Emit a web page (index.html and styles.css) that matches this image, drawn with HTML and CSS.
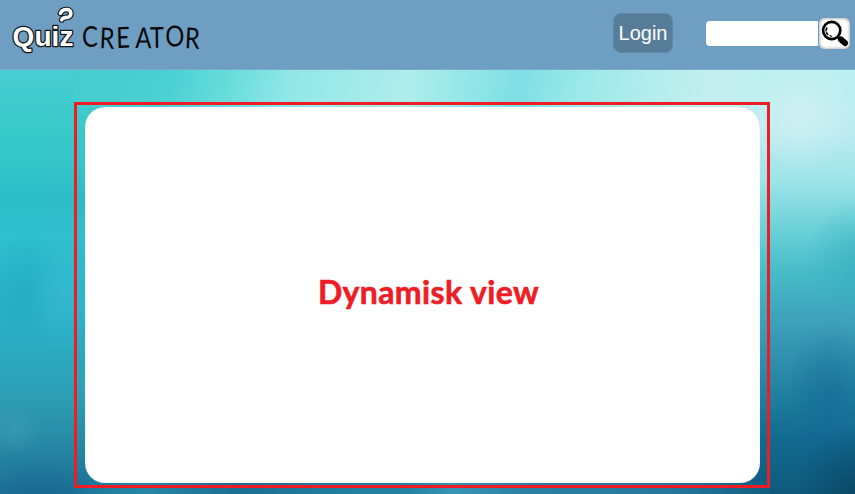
FILE: index.html
```
<!DOCTYPE html>
<html lang="sv">
<head>
<meta charset="utf-8">
<title>Quiz Creator</title>
<link rel="stylesheet" href="styles.css">
</head>
<body>
<header class="topbar">
  <svg class="logo" viewBox="0 0 210 60" role="img" aria-label="Quiz Creator">
    <text class="logo-quiz" y="45.5" textLength="61" x="12.5">Quiz</text>
    <path class="hook-edge" d="M60.5 13.2C62 8.8 70.3 8 70.8 12.8C71.2 17 67.8 17.4 65.2 17.6Q62.3 18 61.8 19.8"/>
    <path class="hook" d="M60.5 13.2C62 8.8 70.3 8 70.8 12.8C71.2 17 67.8 17.4 65.2 17.6Q62.3 18 61.8 19.8"/>
    <text class="logo-creator" transform="scale(.82 1)" x="100 121 142 165 183 202 225" y="47 48 48 48 48 47 48" rotate="0 3 -2 1 -1 -3 3">CREATOR</text>
  </svg>
  <nav class="actions">
    <a class="login">Login</a>
    <form class="search">
      <input class="search-field" type="text" aria-label="Search">
      <button class="search-button" type="button" aria-label="Search">
        <svg class="lens" viewBox="0 0 31 31">
          <path d="M18.5 18.5L22 22" stroke="#000" stroke-width="3"/>
          <path d="M22 21.5L26 25" stroke="#000" stroke-width="6" stroke-linecap="round"/>
          <circle cx="12.7" cy="12.5" r="8.6" fill="#fff" stroke="#000" stroke-width="2.7"/>
          <path d="M8 9.5Q5.8 13.5 9 17" fill="none" stroke="#000" stroke-width="1.7" stroke-dasharray="4 1"/>
          <path d="M10.5 17.5L13 18.5" stroke="#000" stroke-width="1.2"/>
        </svg>
      </button>
    </form>
  </nav>
</header>
<main class="stage">
  <div class="frame">
    <section class="view"><h1 class="view-title">Dynamisk view</h1></section>
  </div>
</main>
</body>
</html>
```

FILE: styles.css
```
* { box-sizing: border-box; }
body {
  margin: 0;
  height: 494px;
  overflow: hidden;
  display: flex;
  flex-direction: column;
  font-family: "Liberation Sans", Arial, sans-serif;
}
.topbar {
  height: 70px;
  flex: none;
  display: flex;
  align-items: flex-start;
  justify-content: space-between;
  padding-right: 5px;
  background: #6f9ec3;
  border-bottom: 1px solid #79abc9;
}
.logo { width: 210px; height: 60px; }
.logo-quiz {
  font: bold 28px "Liberation Sans", sans-serif;
  fill: #fff;
  stroke: #151515;
  stroke-width: 2.6px;
  stroke-linejoin: round;
  paint-order: stroke;
}
.logo-creator {
  font: 29px Lato, sans-serif;
  fill: #080808;
}
.hook, .hook-edge { fill: none; stroke-linecap: round; }
.hook-edge { stroke: #151515; stroke-width: 5.8px; }
.hook { stroke: #fff; stroke-width: 3.6px; }
.actions { display: flex; align-items: flex-start; gap: 33px; padding-top: 13px; }
.login {
  width: 60px;
  height: 40px;
  border: 1px solid #6088a7;
  border-radius: 8px;
  background: #567c98;
  color: #fff;
  font-size: 20px;
  line-height: 38px;
  text-align: center;
}
.search { display: flex; align-items: center; gap: 1px; margin: 5px 0 0; }
.search-field {
  width: 112px;
  height: 25px;
  margin: 0;
  border: 0;
  border-radius: 4px 0 0 4px;
  background: #fff;
}
.search-button {
  width: 31px;
  height: 31px;
  padding: 0;
  border: 0;
  border-radius: 6px;
  background: #fff;
  box-shadow: inset 0 0 3px 1px #bbb;
}
.lens { display: block; width: 31px; height: 31px; }
.stage {
  flex: 1;
  padding: 32px 85px 6px 74px;
  background:
    radial-gradient(ellipse 28px 26px at 13px 360px, #419fb399, transparent),
    radial-gradient(ellipse 35px 60px at 60px 225px, #40c2d866, transparent),
    radial-gradient(ellipse 40px 60px at 28px 220px, #1ca5bc66, transparent),
    radial-gradient(ellipse 50px 34px at 40px 424px, #18628e88, transparent),
    radial-gradient(ellipse 45px 70px at 830px 325px, #12649188, transparent),
    radial-gradient(ellipse 55px 55px at 800px 45px, #d5f1f4bb, transparent),
    radial-gradient(ellipse 60px 70px at 855px 424px, #073e5899, transparent),
    radial-gradient(ellipse 50px 60px at 855px 190px, #30a9b988, transparent),
    linear-gradient(100deg, #45cccd, #4bd0d4 14%, #66dcda 22%, #90e7e7 31%, #afedeb 48%, #98e8e9 55%, #7edfe4 64%, #9ce9e9 73%, #b4eeec 84%, #c4eef0 92%, #bcefef) 74px 0 / 693px 38px no-repeat,
    linear-gradient(90deg, #1b7499, #2588a4 10%, #1c6f94 23%, #207c9d 36%, #2382a0 48%, #3795b2 54%, #2a7fa0 66%, #26799c 85%, #125e80) 74px 411px / 696px 13px no-repeat,
    linear-gradient(#bcefef, #bdecf0 14%, #9ee4e8 26%, #69d0d7 38%, #46bbc8 48%, #3c9db8 61%, #1e7d9e 78%, #126990 87%, #0f5a7c) 745px 0 / 110px 424px no-repeat,
    linear-gradient(#48cdd1, #38c9c9 14%, #35c6ca 22%, #2cbcc6 30%, #2fbfce 39%, #2ab3c7 53%, #2badc3 62%, #2da0b6 76%, #298da8 86%, #2380a0 92%, #1b7095);
}
.frame {
  height: 386px;
  padding: 2px 7px 2px 8px;
  border: 3px solid #ee1c24;
}
.view {
  height: 376px;
  display: flex;
  align-items: center;
  justify-content: center;
  border-radius: 20px;
  background: #fff;
  box-shadow: inset 0 0 1px #6bb8c8;
}
.view-title {
  margin: 0 0 7px 12px;
  color: #ee1c24;
  font: bold 32px/1 Lato, sans-serif;
  letter-spacing: .4px;
  -webkit-text-stroke: .6px #ee1c24;
}
```
